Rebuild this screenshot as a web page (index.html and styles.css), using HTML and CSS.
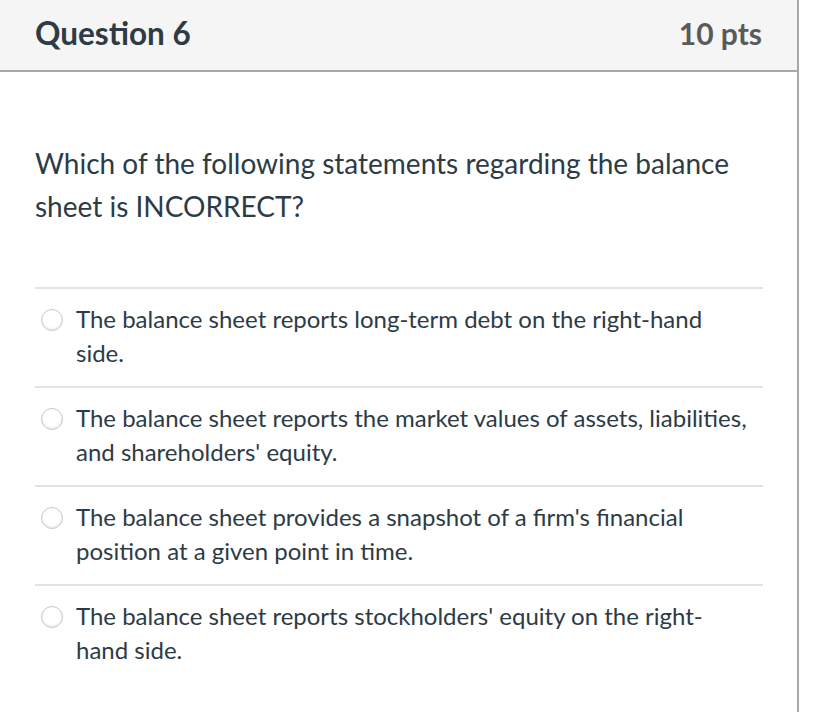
FILE: index.html
```html
<!DOCTYPE html>
<html>
<head>
<meta charset="utf-8">
<link rel="stylesheet" href="styles.css">
</head>
<body>
<div class="question">
  <div class="header">
    <span class="title">Question 6</span>
    <span class="points">10 pts</span>
  </div>
  <div class="content">
    <p class="text">Which of the following statements regarding the balance sheet is INCORRECT?</p>
    <div class="answers">
      <div class="answer"><span class="radio"></span><span class="label">The balance sheet reports long-term debt on the right-hand side.</span></div>
      <div class="answer"><span class="radio"></span><span class="label">The balance sheet reports the market values of assets, liabilities, and shareholders' equity.</span></div>
      <div class="answer"><span class="radio"></span><span class="label">The balance sheet provides a snapshot of a firm's financial position at a given point in time.</span></div>
      <div class="answer"><span class="radio"></span><span class="label">The balance sheet reports stockholders' equity on the right-hand side.</span></div>
    </div>
  </div>
</div>
</body>
</html>
```

FILE: styles.css
```css
html, body {
  margin: 0;
  padding: 0;
  background: #fff;
}
body {
  font-family: Lato, "Open Sans", sans-serif;
  color: #2d3b45;
}
.question {
  width: 797px;
  height: 712px;
  border-right: 2px solid #a8a8a8;
  box-sizing: content-box;
}
.header {
  height: 70px;
  background: #f5f5f5;
  border-bottom: 2px solid #a8a8a8;
  display: flex;
  align-items: center;
  justify-content: space-between;
  padding: 0 35px;
}
.title {
  font-size: 31.5px;
  font-weight: 700;
  color: #2d3b45;
  margin-top: -4px;
}
.points {
  font-size: 30px;
  font-weight: 700;
  color: #5a5a5a;
  margin-top: -4px;
}
.content {
  padding: 0 34px 0 35px;
}
.text {
  margin: 70px 0 0;
  font-size: 28px;
  line-height: 43px;
}
.answers {
  margin-top: 59px;
}
.answer {
  border-top: 2px solid #e2e2e2;
  display: flex;
  align-items: flex-start;
  padding: 13px 13px 16px 6px;
}
.radio {
  flex: none;
  width: 20px;
  height: 20px;
  border-radius: 50%;
  border: 1px solid #c8c8c8;
  box-shadow: inset 0 -1px 2px rgba(0,0,0,0.1);
  background: #fff;
  margin-top: 7px;
  margin-right: 13px;
}
.label {
  font-size: 24px;
  line-height: 34px;
}
```
